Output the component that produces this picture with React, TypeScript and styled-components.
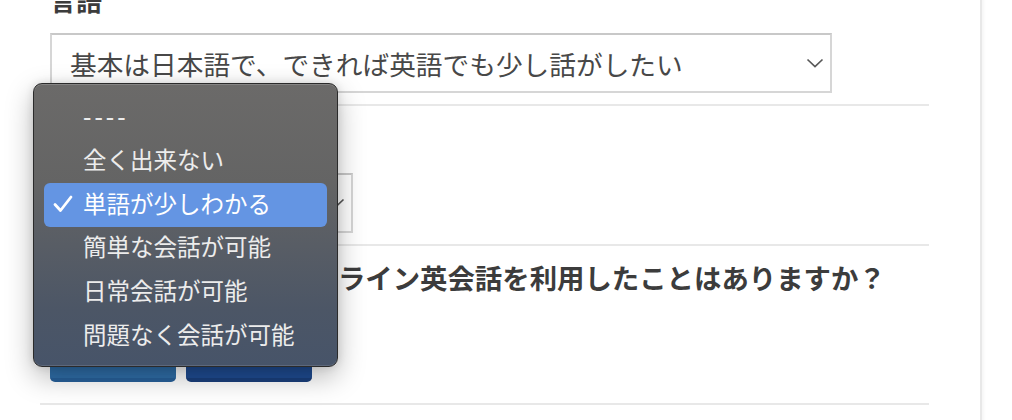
import styled, { createGlobalStyle } from "styled-components";

const GlobalStyle = createGlobalStyle`
  html, body {
    margin: 0;
    padding: 0;
    background: #fff;
    overflow: hidden;
  }
  body {
    font-family: "Noto Sans CJK JP", "Noto Sans", sans-serif;
    color: #444;
  }
`;

const Page = styled.div`
  position: relative;
  width: 1012px;
  height: 420px;
  overflow: hidden;
`;

const Panel = styled.div`
  width: 889px;
  padding: 0 51px 0 40px;
  margin-top: -18px;
  border-right: 2px solid #e8e8e8;
  box-shadow: 2px 0 3px rgba(0, 0, 0, 0.04);
  height: 460px;
`;

const Section = styled.section<{ $top: number; $bottom: number }>`
  padding: ${(p) => p.$top}px 10px ${(p) => p.$bottom}px;
  border-bottom: 2px solid #e8e8e8;
`;

const Label = styled.h2<{ $gap: number; $size?: number; $indent?: number }>`
  margin: 0 0 ${(p) => p.$gap}px;
  font-size: ${(p) => p.$size ?? 26}px;
  line-height: 36px;
  font-weight: 700;
  color: #3c3c3c;
  white-space: nowrap;
  text-indent: ${(p) => p.$indent ?? 0}px;
`;

const Select = styled.div<{ $width: number }>`
  box-sizing: border-box;
  width: ${(p) => p.$width}px;
  height: 60px;
  display: flex;
  align-items: center;
  justify-content: space-between;
  padding: 0 6px 0 18px;
  border: 2px solid #d6d6d6;
  border-top-color: #c8c8c8;
  background: #fff;
  font-size: 26.7px;
  color: #484848;
  white-space: nowrap;
  overflow: hidden;
`;

const Chevron = () => (
  <svg width="18" height="10" viewBox="0 0 18 10">
    <polyline
      points="1.5,1.5 9,8.5 16.5,1.5"
      fill="none"
      stroke="#585858"
      strokeWidth="1.7"
    />
  </svg>
);

const Buttons = styled.div`
  display: flex;
  gap: 10px;
`;

const Choice = styled.div<{ $tone: "light" | "dark" }>`
  width: 126px;
  height: 50px;
  box-sizing: border-box;
  border-radius: 5px;
  background: ${(p) => (p.$tone === "light" ? "#2f6ea8" : "#1f4c92")};
  border-bottom: 4px solid ${(p) => (p.$tone === "light" ? "#27609a" : "#1a3f7c")};
  color: #fff;
  font-size: 22px;
  font-weight: 700;
  display: flex;
  align-items: center;
  justify-content: center;
`;

const Menu = styled.div`
  position: absolute;
  left: 33px;
  top: 83px;
  width: 305px;
  box-sizing: border-box;
  padding: 12px 10px 8px;
  border-radius: 9px;
  border: 1px solid #2b2b2b;
  background: linear-gradient(180deg, #6b6a69 0%, #646464 35%, #4c5666 80%, #475469 100%);
  box-shadow: inset 0 1px 0 rgba(255, 255, 255, 0.18),
    inset 0 -1px 0 rgba(255, 255, 255, 0.12), 0 10px 28px rgba(0, 0, 0, 0.28),
    0 0 8px rgba(0, 0, 0, 0.12);
`;

const Item = styled.div<{ $active?: boolean; $dashes?: boolean }>`
  position: relative;
  height: 43.6px;
  box-sizing: border-box;
  display: flex;
  align-items: center;
  padding: 0 0 3px 39px;
  line-height: 1;
  border-radius: 6px;
  background: ${(p) => (p.$active ? "#6495e3" : "transparent")};
  color: ${(p) => (p.$active ? "#fff" : "#ececec")};
  font-size: 23.5px;
  letter-spacing: ${(p) => (p.$dashes ? "3px" : "0")};
  font-weight: ${(p) => (p.$dashes ? 500 : 400)};
  white-space: nowrap;
`;

const Check = styled.svg`
  position: absolute;
  left: 9px;
  top: 12px;
`;

const levels = [
  "----",
  "全く出来ない",
  "単語が少しわかる",
  "簡単な会話が可能",
  "日常会話が可能",
  "問題なく会話が可能",
];

export default function App() {
  return (
    <Page>
      <GlobalStyle />
      <Panel>
        <Section $top={0} $bottom={11}>
          <Label $gap={15}>言語</Label>
          <Select $width={782}>
            <span>基本は日本語で、できれば英語でも少し話がしたい</span>
            <Chevron />
          </Select>
        </Section>
        <Section $top={18} $bottom={11}>
          <Label $gap={13}>英語レベル</Label>
          <Select $width={303}>
            <span>単語が少しわかる</span>
            <Chevron />
          </Select>
        </Section>
        <Section $top={13} $bottom={21}>
          <Label $gap={37} $size={27.4} $indent={14}>
            これまでに他社のオンライン英会話を利用したことはありますか？
          </Label>
          <Buttons>
            <Choice $tone="light">はい</Choice>
            <Choice $tone="dark">いいえ</Choice>
          </Buttons>
        </Section>
      </Panel>
      <Menu>
        {levels.map((level, i) => (
          <Item key={level} $active={i === 2} $dashes={i === 0}>
            {i === 2 && (
              <Check width="20" height="18" viewBox="0 0 20 18">
                <polyline
                  points="2,9.5 7.5,15.5 18,2"
                  fill="none"
                  stroke="#fff"
                  strokeWidth="2.8"
                  strokeLinecap="round"
                  strokeLinejoin="round"
                />
              </Check>
            )}
            {level}
          </Item>
        ))}
      </Menu>
    </Page>
  );
}
